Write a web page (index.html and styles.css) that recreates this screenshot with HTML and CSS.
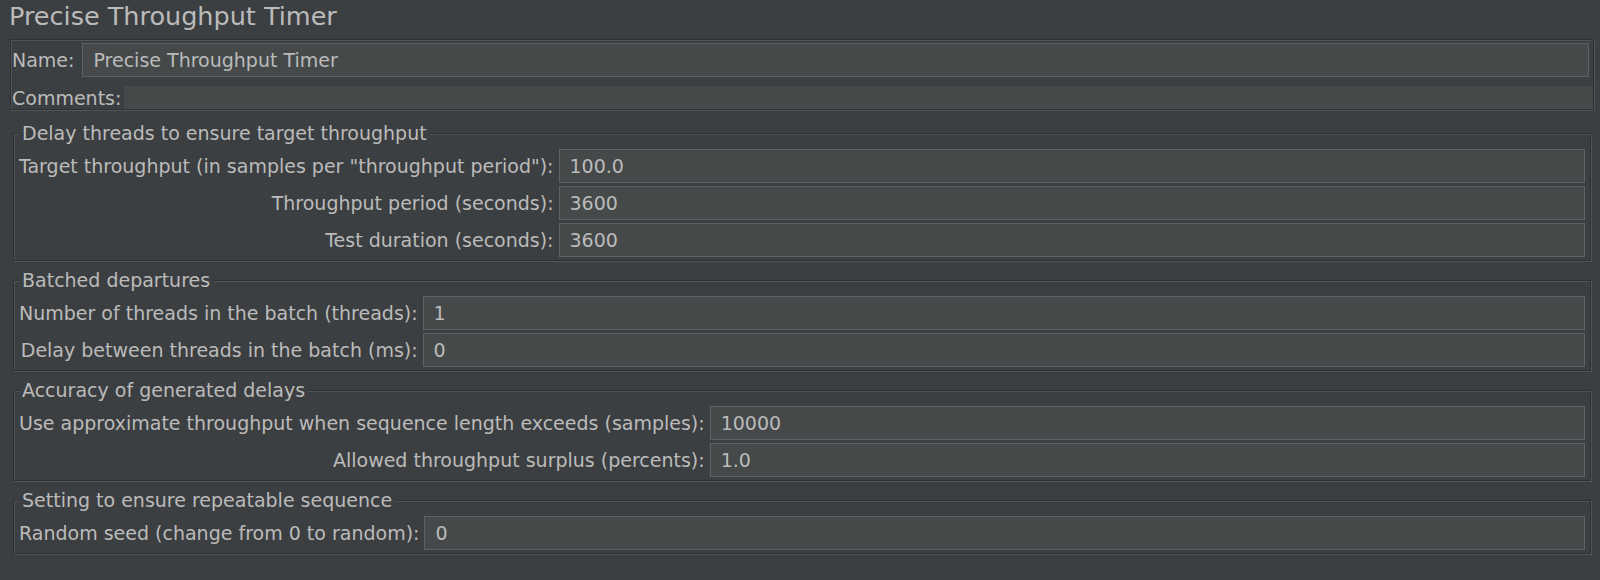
FILE: index.html
```html
<!DOCTYPE html>
<html>
<head>
<meta charset="utf-8">
<link rel="stylesheet" href="styles.css">
</head>
<body>
<div class="title">Precise Throughput Timer</div>
<div class="namepanel">
  <div class="namerow"><span class="lbl">Name:</span><div class="field">Precise Throughput Timer</div></div>
  <div class="commentrow"><span class="lbl">Comments:</span><div class="comments"></div></div>
</div>
<fieldset class="group">
  <legend>Delay threads to ensure target throughput</legend>
  <div class="grid">
    <span class="lbl">Target throughput (in samples per "throughput period"):</span><div class="field">100.0</div>
    <span class="lbl">Throughput period (seconds):</span><div class="field">3600</div>
    <span class="lbl">Test duration (seconds):</span><div class="field">3600</div>
  </div>
</fieldset>
<fieldset class="group">
  <legend>Batched departures</legend>
  <div class="grid">
    <span class="lbl">Number of threads in the batch (threads):</span><div class="field">1</div>
    <span class="lbl">Delay between threads in the batch (ms):</span><div class="field">0</div>
  </div>
</fieldset>
<fieldset class="group">
  <legend>Accuracy of generated delays</legend>
  <div class="grid">
    <span class="lbl">Use approximate throughput when sequence length exceeds (samples):</span><div class="field">10000</div>
    <span class="lbl">Allowed throughput surplus (percents):</span><div class="field">1.0</div>
  </div>
</fieldset>
<fieldset class="group">
  <legend>Setting to ensure repeatable sequence</legend>
  <div class="grid">
    <span class="lbl">Random seed (change from 0 to random):</span><div class="field">0</div>
  </div>
</fieldset>
</body>
</html>
```

FILE: styles.css
```css
html, body {
  margin: 0;
  padding: 0;
  background: #3c3f41;
  color: #bbbbbb;
  font-family: "DejaVu Sans", "Noto Sans", sans-serif;
  font-size: 19px;
  width: 1600px;
  height: 580px;
  overflow: hidden;
}
.title {
  height: 34px;
  line-height: 32px;
  font-size: 25.5px;
  padding-left: 9px;
  box-sizing: border-box;
}
.namepanel {
  margin: 5px 6px 0 10px;
  border: 1px solid #2f3133;
  box-shadow: inset 1px 1px 0 #515456, 1px 1px 0 #515456;
  padding: 3px 0 0 1px;
}
.namerow {
  display: flex;
  align-items: center;
  gap: 8px;
  margin-right: 4px;
}
.commentrow {
  display: flex;
  align-items: center;
  margin-top: 9px;
  height: 23px;
  gap: 3px;
}
.comments {
  flex: 1;
  align-self: stretch;
  background: #45494a;
}
.field {
  flex: 1;
  height: 34px;
  line-height: 32px;
  box-sizing: border-box;
  background: #45494a;
  border: 1px solid #5f6264;
  padding-left: 10px;
  white-space: nowrap;
}
.lbl {
  white-space: nowrap;
}
.group {
  margin: 8px 9px 0 13px;
  padding: 0 5px 3px 5px;
  border: 1px solid #2f3133;
  box-shadow: inset 1px 1px 0 #515456, 1px 1px 0 #515456;
  min-width: 0;
}
.namepanel + .group {
  margin-top: 12px;
}
.group legend {
  padding: 0 3px;
  margin-left: 0;
  line-height: 22px;
  background: #3c3f41;
}
.grid {
  display: grid;
  grid-template-columns: auto 1fr;
  column-gap: 5px;
  row-gap: 3px;
  align-items: center;
  margin-top: 5px;
}
.grid .lbl {
  text-align: right;
}
```
